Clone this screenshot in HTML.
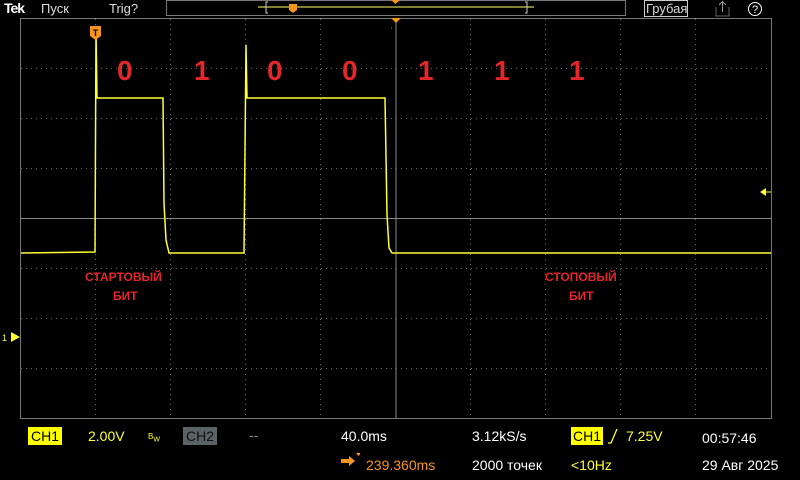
<!DOCTYPE html>
<html><head><meta charset="utf-8"><style>
html,body{margin:0;padding:0;background:#000;width:800px;height:480px;overflow:hidden;font-family:"Liberation Sans","DejaVu Sans",sans-serif}
.t{position:absolute;white-space:nowrap;font-size:14px}
</style></head><body>
<svg width="800" height="480" style="position:absolute;left:0;top:0">
<g stroke="#777" stroke-width="1" fill="none">
<rect x="20.5" y="18.5" width="751" height="400"/>
</g>
<g stroke="#666" stroke-width="1" stroke-dasharray="1,4">
<line x1="95.5" y1="19" x2="95.5" y2="418"/><line x1="170.5" y1="19" x2="170.5" y2="418"/><line x1="245.5" y1="19" x2="245.5" y2="418"/><line x1="320.5" y1="19" x2="320.5" y2="418"/><line x1="470.5" y1="19" x2="470.5" y2="418"/><line x1="545.5" y1="19" x2="545.5" y2="418"/><line x1="620.5" y1="19" x2="620.5" y2="418"/><line x1="695.5" y1="19" x2="695.5" y2="418"/>
<line x1="21" y1="68.5" x2="771" y2="68.5"/><line x1="21" y1="118.5" x2="771" y2="118.5"/><line x1="21" y1="168.5" x2="771" y2="168.5"/><line x1="21" y1="268.5" x2="771" y2="268.5"/><line x1="21" y1="318.5" x2="771" y2="318.5"/><line x1="21" y1="368.5" x2="771" y2="368.5"/>
</g>
<g stroke="#888" stroke-width="1">
<line x1="396" y1="19" x2="396" y2="418"/><line x1="21" y1="218.5" x2="771" y2="218.5"/>
</g>
<g stroke="#888" stroke-width="1" stroke-dasharray="1,14" >
<line x1="391" y1="28" x2="401" y2="28"/>
</g>
<!-- waveform -->
<polyline fill="none" stroke="#ffff33" stroke-width="1.5" points="21,253 95,252 96,30 97,98 163,98 164,203 166,240 169,253 244,253 246,45 247,98 385,98 387,215 389,248 392,253 771,253"/>
<!-- trigger T marker -->
<path d="M90,26 h11 v10 l-5.5,4 l-5.5,-4z" fill="#f7941d"/>
<text x="95.5" y="36" fill="#000" font-size="9" font-weight="bold" text-anchor="middle" font-family="Liberation Sans">T</text>
<path d="M391,18 h10 l-5,5z" fill="#f7941d"/>
<!-- right trigger level arrow -->
<path d="M760,192 l6,-4 v8z" fill="#ffff33"/><line x1="766" y1="192" x2="771" y2="192" stroke="#ffff33"/>
<!-- ch1 marker -->
<path d="M11,332 l9,5 l-9,5z" fill="#ffff33"/>
<text x="2" y="341" fill="#ffff33" font-size="9">1</text>
<!-- top timeline box -->
<rect x="166.5" y="0.5" width="459" height="15" stroke="#777" fill="none"/>
<line x1="258" y1="7" x2="534" y2="7" stroke="#ffff66"/>
<path d="M268,2 h-2 v11 h2 M525,2 h2 v11 h-2" stroke="#ccc" fill="none"/>
<path d="M289,4 h8 v6 l-4,3 l-4,-3z" fill="#f7941d"/>
<path d="M391,0 h9 l-4.5,4z" fill="#f7941d"/>
<rect x="644.5" y="0.5" width="43" height="16" stroke="#ccc" fill="none"/>
<path d="M716,7 v9 h13 v-9" stroke="#666" fill="none"/><path d="M722.5,12 v-10 M719,5 l3.5,-3.5 l3.5,3.5" stroke="#999" fill="none"/>
<circle cx="755" cy="9" r="6.5" stroke="#fff" fill="none"/>
<text x="755" y="13" fill="#fff" font-size="11" text-anchor="middle">?</text>
</svg>
<div class="t" style="left:4px;top:0;color:#fff;font-weight:bold;font-size:14px;letter-spacing:-1px">Tek</div>
<div class="t" style="left:41px;top:1px;color:#ddd;font-size:13px">Пуск</div>
<div class="t" style="left:109px;top:1px;color:#ddd;font-size:13px">Trig?</div>
<div class="t" style="left:646px;top:1px;color:#ddd;font-size:13px">Грубая</div>
<div class="t" style="left:117px;top:55px;color:#e3262a;font-weight:bold;font-size:28px">0</div>
<div class="t" style="left:194px;top:55px;color:#e3262a;font-weight:bold;font-size:28px">1</div>
<div class="t" style="left:267px;top:55px;color:#e3262a;font-weight:bold;font-size:28px">0</div>
<div class="t" style="left:342px;top:55px;color:#e3262a;font-weight:bold;font-size:28px">0</div>
<div class="t" style="left:418px;top:55px;color:#e3262a;font-weight:bold;font-size:28px">1</div>
<div class="t" style="left:494px;top:55px;color:#e3262a;font-weight:bold;font-size:28px">1</div>
<div class="t" style="left:569px;top:55px;color:#e3262a;font-weight:bold;font-size:28px">1</div>
<div class="t" style="left:85px;top:270px;color:#e3262a;font-weight:bold;font-size:12px">СТАРТОВЫЙ</div>
<div class="t" style="left:113px;top:289px;color:#e3262a;font-weight:bold;font-size:12px">БИТ</div>
<div class="t" style="left:545px;top:270px;color:#e3262a;font-weight:bold;font-size:12px">СТОПОВЫЙ</div>
<div class="t" style="left:569px;top:289px;color:#e3262a;font-weight:bold;font-size:12px">БИТ</div>
<div class="t" style="left:28px;top:427px;background:#ffff00;color:#000;padding:0 3px;line-height:18px">CH1</div>
<div class="t" style="left:88px;top:428px;color:#ffff33">2.00V</div>
<div class="t" style="left:148px;top:432px;color:#ffff33;font-size:8px">B<sub style="font-size:7px">W</sub></div>
<div class="t" style="left:183px;top:427px;background:#5a6366;color:#111;padding:0 3px;line-height:18px">CH2</div>
<div class="t" style="left:249px;top:427px;color:#888">--</div>
<div class="t" style="left:341px;top:428px;color:#fff">40.0ms</div>
<div class="t" style="left:472px;top:428px;color:#fff">3.12kS/s</div>
<div class="t" style="left:571px;top:427px;background:#ffff00;color:#000;padding:0 2px;line-height:18px">CH1</div>
<svg width="20" height="20" style="position:absolute;left:606px;top:426px"><path d="M2,17 h3 l6,-14" stroke="#ffff33" fill="none" stroke-width="1.3"/></svg>
<div class="t" style="left:626px;top:428px;color:#ffff33">7.25V</div>
<div class="t" style="left:702px;top:430px;color:#fff">00:57:46</div>
<svg width="20" height="20" style="position:absolute;left:340px;top:452px"><path d="M1,7 h8 v-3 l6,5 l-6,5 v-3 h-8z" fill="#f7941d"/><path d="M16,1 h5 l-2.5,3z" fill="#f7941d"/></svg>
<div class="t" style="left:366px;top:457px;color:#f7941d">239.360ms</div>
<div class="t" style="left:472px;top:457px;color:#fff">2000 точек</div>
<div class="t" style="left:571px;top:457px;color:#ffff33">&lt;10Hz</div>
<div class="t" style="left:702px;top:457px;color:#fff">29 Авг 2025</div>
</body></html>
